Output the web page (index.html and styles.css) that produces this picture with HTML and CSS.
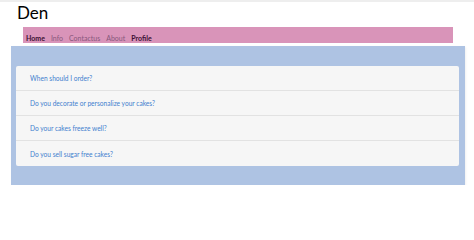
FILE: index.html
```html
<!DOCTYPE html>
<html lang="en">
<head>
<meta charset="utf-8">
<title>Den</title>
<link rel="stylesheet" href="styles.css">
</head>
<body>
<div class="topstrip"></div>
<h1 class="brand">Den</h1>

<ul class="menu">
	<li><a href="#" class="on">Home</a></li>
	<li><a href="#">Info</a></li>
	<li><a href="#">Contactus</a></li>
	<li><a href="#">About</a></li>
	<li><a href="#" class="on">Profile</a></li>
</ul>

<div class="faq-box">
	<div class="faq-list">
		<div class="faq-item"><a href="#">When should I order?</a></div>
		<div class="faq-item"><a href="#">Do you decorate or personalize your cakes?</a></div>
		<div class="faq-item"><a href="#">Do your cakes freeze well?</a></div>
		<div class="faq-item"><a href="#">Do you sell sugar free cakes?</a></div>
	</div>
</div>
</body>
</html>
```

FILE: styles.css
```css
body {
	margin:0;
	background-color:#fff;
	font-family:Lato, "Open Sans", Arial, sans-serif;
	color:#000;
}
.topstrip {
	height:2px;
	background-color:#eeeeee;
}
.brand {
	margin:0 0 0 17px;
	font-size:17px;
	font-weight:normal;
	line-height:21px;
	height:25px;
}
.menu {
	list-style:none;
	margin:0 21px 0 23px;
	padding:0 0 1px 3px;
	height:15px;
	display:flex;
	align-items:center;
	gap:6px;
	background-color:#d994b9;
}
.menu a {
	font-size:7px;
	text-decoration:none;
	color:#87577c;
}
.menu a.on {
	color:#3b0f32;
	font-weight:bold;
}
.faq-box {
	margin:3px 9px 0 11px;
	padding:20px 6px 19px 5px;
	background-color:#aec3e3;
	box-shadow:1px 1px 2px rgba(0,0,0,.06);
}
.faq-list {
	background-color:#f6f6f6;
	border-radius:2px;
}
.faq-item {
	height:24px;
	display:flex;
	align-items:center;
	padding-left:14px;
	border-bottom:1px solid #e2e2e2;
}
.faq-item:last-child {
	border-bottom:0;
	height:25px;
}
.faq-item a {
	font-size:6.6px;
	color:#3f7fce;
	text-decoration:none;
}
```
